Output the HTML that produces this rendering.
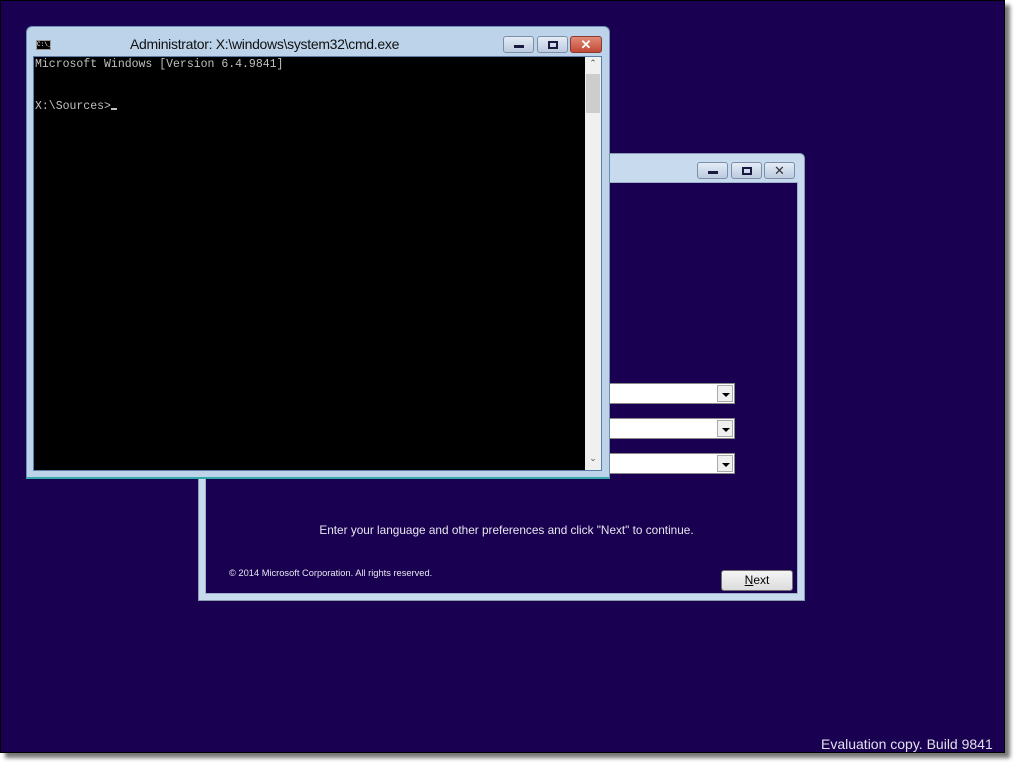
<!DOCTYPE html>
<html><head><meta charset="utf-8"><style>
*{margin:0;padding:0;box-sizing:border-box}
body{width:1019px;height:768px;background:#fff;position:relative;overflow:hidden;font-family:"Liberation Sans",sans-serif}
#scr{position:absolute;left:0;top:0;width:1005px;height:753px;background:#1a0050;border:1px solid #000;box-shadow:5px 5px 4px #777}
.abs{position:absolute}
.btn{position:absolute;height:17px;border:1px solid #7d8fa8;border-radius:3px;background:linear-gradient(#e4ecf6,#bccbe0)}
.ico{position:absolute;background:#1a1a40}
.dd{position:absolute;left:610px;width:125px;height:21px;background:#fff;border:1px solid #888;border-left:none}
.dd i{position:absolute;right:1px;top:1px;width:16px;height:17px;background:#f0f0f0;border:1px solid #aaa}
.dd i:after{content:"";position:absolute;left:4px;top:7px;border-left:4px solid transparent;border-right:4px solid transparent;border-top:4px solid #000}
</style></head><body>
<div id="scr"></div>

<!-- setup window -->
<div class="abs" style="left:198px;top:153px;width:607px;height:448px;background:#c8daee;border:1px solid #8a9bb0;border-radius:5px 5px 0 0"></div>
<div class="abs" style="left:205px;top:182px;width:593px;height:412px;background:#1a0050;border:1px solid #9fb2c8"></div>
<div class="btn" style="left:697px;top:162px;width:31px"><div class="ico" style="left:10px;top:8px;width:10px;height:3px"></div></div>
<div class="btn" style="left:731px;top:162px;width:31px"><div class="ico" style="left:10px;top:4px;width:10px;height:8px;background:none;border:2px solid #1a1a40"></div></div>
<div class="btn" style="left:764px;top:162px;width:31px;font-size:13px;text-align:center;line-height:15px;color:#333">✕</div>

<div class="dd" style="top:383px"><i></i></div>
<div class="dd" style="top:418px"><i></i></div>
<div class="dd" style="top:453px"><i></i></div>

<div class="abs" style="left:210px;top:523px;width:593px;text-align:center;color:#e6e6f0;font-size:11.8px">Enter your language and other preferences and click "Next" to continue.</div>
<div class="abs" style="left:229px;top:568px;color:#e6e6f0;font-size:9.3px">© 2014 Microsoft Corporation. All rights reserved.</div>
<div class="abs" style="left:721px;top:570px;width:72px;height:21px;border:1px solid #707070;border-radius:3px;background:linear-gradient(#f4f4f4,#dcdcdc);text-align:center;font-size:12px;line-height:19px;color:#000"><u>N</u>ext</div>

<!-- cmd window -->
<div class="abs" style="left:26px;top:26px;width:584px;height:453px;background:#bcd3ea;border:1px solid #6f8fb0;border-bottom:2px solid #3aa;border-radius:6px 6px 0 0"></div>
<div class="abs" style="left:36px;top:40px;width:15px;height:10px;background:#000;border:1px solid #999;color:#fff;font-size:6px;line-height:8px;font-family:'Liberation Mono',monospace">C:\_</div>
<div class="abs" style="left:130px;top:36px;width:300px;font-size:14px;color:#111;white-space:nowrap;letter-spacing:-0.3px">Administrator: X:\windows\system32\cmd.exe</div>
<div class="btn" style="left:503px;top:36px;width:31px"><div class="ico" style="left:10px;top:8px;width:10px;height:3px"></div></div>
<div class="btn" style="left:537px;top:36px;width:31px"><div class="ico" style="left:10px;top:4px;width:10px;height:8px;background:none;border:2px solid #1a1a40"></div></div>
<div class="abs" style="left:570px;top:36px;width:32px;height:17px;border:1px solid #8a3a30;border-radius:3px;background:linear-gradient(#e08a78,#c24a36);color:#fff;font-weight:bold;font-size:13px;text-align:center;line-height:15px">✕</div>
<div class="abs" style="left:33px;top:56px;width:569px;height:415px;background:#000;border:1px solid #5a7ea8"></div>
<div class="abs" style="left:585px;top:57px;width:16px;height:413px;background:#f0f0f0"></div>
<div class="abs" style="left:586px;top:74px;width:14px;height:39px;background:#cdcdcd"></div>
<div class="abs" style="left:585px;top:58px;width:16px;text-align:center;font-size:9px;color:#555">&#8963;</div>
<div class="abs" style="left:585px;top:453px;width:16px;text-align:center;font-size:9px;color:#555">&#8964;</div>
<div class="abs" style="left:35px;top:58px;color:#c0c0c0;font-family:'Liberation Mono',monospace;font-size:11.5px;line-height:14px;white-space:pre">Microsoft Windows [Version 6.4.9841]


X:\Sources><span style="display:inline-block;width:6px;height:2px;background:#c0c0c0;vertical-align:-1px"></span></div>

<div class="abs" style="left:821px;top:736px;color:#e0e0ec;font-size:14px">Evaluation copy. Build 9841</div>
</body></html>
